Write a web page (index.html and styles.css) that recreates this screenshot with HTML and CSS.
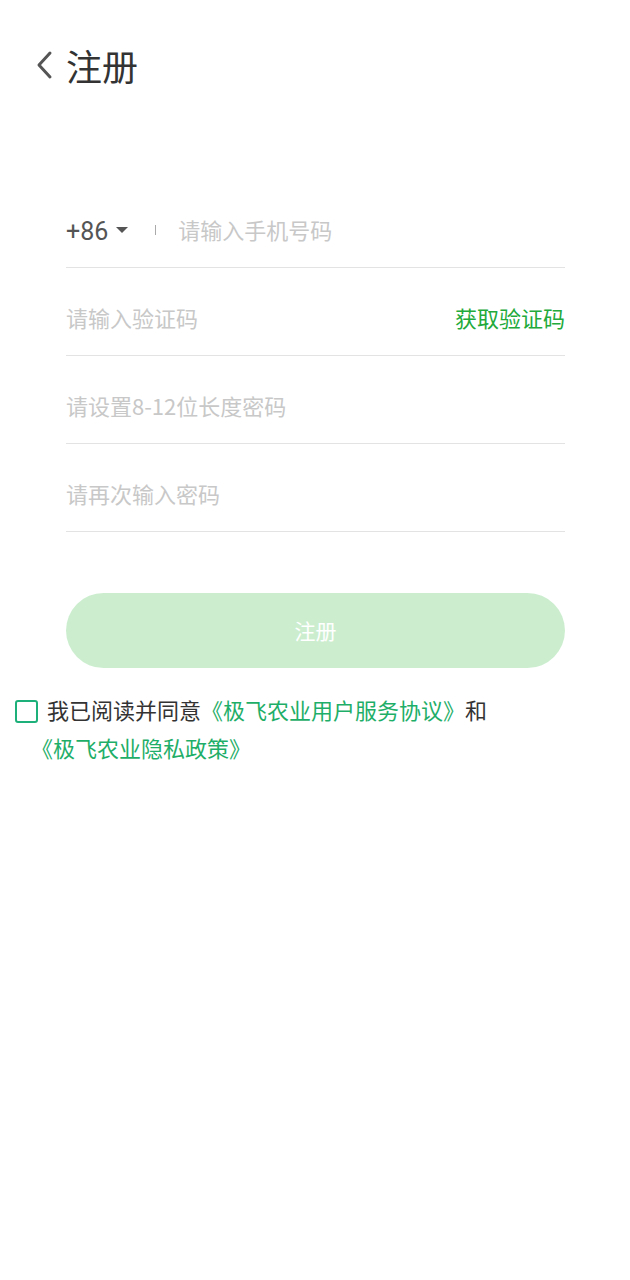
FILE: index.html
```html
<!DOCTYPE html>
<html>
<head>
	<title>注册</title>
	<meta charset="UTF-8">
	<link rel="stylesheet" href="styles.css">
</head>
<body>
	<div class="header">
		<a class="back" href="javascript:;">
			<svg width="20" height="30" viewBox="0 0 20 30"><path d="M15 3 L4 15 L15 27" fill="none" stroke="#555" stroke-width="3" stroke-linecap="round" stroke-linejoin="round"/></svg>
		</a>
		<h1 class="title">注册</h1>
	</div>

	<div class="form">
		<div class="row">
			<span class="code">+86</span>
			<span class="arrow"></span>
			<span class="sep"></span>
			<input class="ipt" type="text" placeholder="请输入手机号码">
		</div>
		<div class="row">
			<input class="ipt" type="text" placeholder="请输入验证码">
			<a class="getCode" href="javascript:;">获取验证码</a>
		</div>
		<div class="row">
			<input class="ipt" type="password" placeholder="请设置8-12位长度密码">
		</div>
		<div class="row">
			<input class="ipt" type="password" placeholder="请再次输入密码">
		</div>
		<a class="btn" href="javascript:;">注册</a>
	</div>

	<p class="agree">
		<span class="check"></span>我已阅读并同意<a href="javascript:;">《极飞农业用户服务协议》</a>和<br><a href="javascript:;">《极飞农业隐私政策》</a>
	</p>
</body>
</html>
```

FILE: styles.css
```css
*{
	margin: 0;
	padding: 0;
}
a{
	text-decoration: none;
}
body{
	width: 630px;
	height: 1280px;
	background: #fff;
	font-family: "Noto Sans CJK SC", "Noto Sans", sans-serif;
	color: #333;
}
.header{
	display: flex;
	align-items: center;
	height: 72px;
	padding: 29px 0 0 35px;
}
.back{
	display: flex;
	width: 20px;
	height: 30px;
	margin-right: 11px;
}
.title{
	font-size: 36px;
	font-weight: normal;
	color: #333;
	line-height: 72px;
}
.form{
	width: 499px;
	margin: 95px 0 0 66px;
}
.row{
	display: flex;
	align-items: center;
	height: 66px;
	padding-bottom: 5px;
	margin-top: 16px;
	border-bottom: 1px solid #e3e3e3;
}
.row:first-child{
	margin-top: 0;
}
.code{
	margin-top: 4px;
	font-family: "Roboto", "Noto Sans", sans-serif;
	font-size: 25px;
	color: #555;
}
.arrow{
	width: 0;
	height: 0;
	margin: 2px 0 0 8px;
	border-left: 6px solid transparent;
	border-right: 6px solid transparent;
	border-top: 6px solid #555;
}
.sep{
	width: 1px;
	height: 10px;
	background: #aaa;
	margin: 2px 22px 0 27px;
}
.ipt{
	flex: 1;
	min-width: 0;
	border: none;
	outline: none;
	background: none;
	font-family: "Noto Sans CJK SC", sans-serif;
	font-size: 22px;
	color: #333;
}
.ipt::placeholder{
	color: #c8c8c8;
}
.getCode{
	font-size: 22px;
	color: #22aa3a;
}
.btn{
	display: block;
	height: 75px;
	margin-top: 61px;
	border-radius: 38px;
	background: #cceecf;
	color: #fff;
	font-size: 21px;
	line-height: 75px;
	text-align: center;
}
.agree{
	margin: 22px 0 0 31px;
	font-size: 22px;
	line-height: 38px;
	color: #333;
	text-spacing-trim: space-all;
}
.agree a{
	color: #1eae68;
}
.check{
	display: inline-block;
	box-sizing: border-box;
	width: 23px;
	height: 23px;
	margin: 0 9px 0 -16px;
	border: 2px solid #1eb07a;
	border-radius: 3px;
	vertical-align: -4px;
}
```
